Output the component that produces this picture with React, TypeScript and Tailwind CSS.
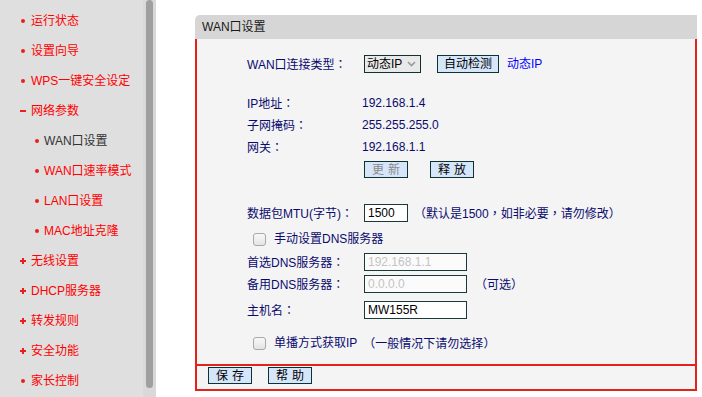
import React from "react";

const FONT = { fontFamily: '"Liberation Sans", "Noto Sans CJK SC", sans-serif' };

function T({ s }: { s: string }) {
  const parts = s.split(/([：（），])/);
  return (
    <>
      {parts.map((p, i) =>
        /^[：（），]$/.test(p) ? (
          <span key={i} className="font-['Noto_Sans_CJK_TC',sans-serif]">
            {p}
          </span>
        ) : (
          <React.Fragment key={i}>{p}</React.Fragment>
        )
      )}
    </>
  );
}

type Item = { label: string; kind: "dot" | "minus" | "plus" | "sub"; active?: boolean };

const items: Item[] = [
  { label: "运行状态", kind: "dot" },
  { label: "设置向导", kind: "dot" },
  { label: "WPS一键安全设定", kind: "dot" },
  { label: "网络参数", kind: "minus" },
  { label: "WAN口设置", kind: "sub", active: true },
  { label: "WAN口速率模式", kind: "sub" },
  { label: "LAN口设置", kind: "sub" },
  { label: "MAC地址克隆", kind: "sub" },
  { label: "无线设置", kind: "plus" },
  { label: "DHCP服务器", kind: "plus" },
  { label: "转发规则", kind: "plus" },
  { label: "安全功能", kind: "plus" },
  { label: "家长控制", kind: "dot" },
];

function Marker({ kind }: { kind: Item["kind"] }) {
  if (kind === "dot")
    return (
      <span className="flex w-[11px] items-center">
        <span className="ml-[1px] h-[4px] w-[4px] rounded-full bg-[#e8211c]" />
      </span>
    );
  if (kind === "sub")
    return (
      <span className="flex w-[9px] items-center">
        <span className="h-[4px] w-[4px] rounded-full bg-[#e8211c]" />
      </span>
    );
  if (kind === "minus")
    return (
      <span className="flex w-[11px] items-center">
        <span className="h-[2px] w-[6px] bg-[#e8211c]" />
      </span>
    );
  return (
    <span className="relative flex h-[6px] w-[11px] items-center">
      <span className="absolute left-0 top-[2px] h-[2px] w-[6px] bg-[#e8211c]" />
      <span className="absolute left-[2px] top-0 h-[6px] w-[2px] bg-[#e8211c]" />
    </span>
  );
}

function Sidebar() {
  return (
    <div className="flex h-[397px] w-[156px] shrink-0">
      <div className="w-[143px] bg-[#dfdfdf] pt-[6px]">
        {items.map((it) => (
          <div
            key={it.label}
            className={`flex h-[30px] items-center text-[12px] ${
              it.kind === "sub" ? "pl-[35px]" : "pl-[20px]"
            } ${it.active ? "text-[#333333]" : "text-[#ff0000]"}`}
          >
            <Marker kind={it.kind} />
            <span>{it.label}</span>
          </div>
        ))}
      </div>
      <div className="w-[13px] bg-[#d9d9d9] pl-[3px]">
        <div className="h-[388px] w-[7px] rounded-full bg-[#9f9f9f]" />
      </div>
    </div>
  );
}

function Btn({ children, disabled, w }: { children: React.ReactNode; disabled?: boolean; w: string }) {
  return (
    <div
      className={`flex h-[17px] ${w} items-center justify-center border border-[#0c3232] bg-[#d6e6fa] text-[12px] tracking-[4px] ${
        disabled ? "text-[#8a8a8a]" : "text-black"
      }`}
    >
      <span className="pl-[4px]">{children}</span>
    </div>
  );
}

function Label({ s }: { s: string }) {
  return (
    <div className="w-[117px] shrink-0 text-[#0a0a6e]">
      <T s={s} />
    </div>
  );
}

function Input({ value, w, muted }: { value: string; w: string; muted?: boolean }) {
  return (
    <div
      className={`flex h-[18px] ${w} items-center border border-[#1a3a3a] px-[3px] text-[12px] ${
        muted ? "bg-[#fbfbfb] text-[#c4c4c4]" : "bg-white text-black"
      }`}
    >
      {value}
    </div>
  );
}

function Check() {
  return <div className="ml-[6px] h-[13px] w-[13px] rounded-[3px] border border-[#a8a8a8] bg-gradient-to-b from-[#f8f8f8] to-[#e4e4e4]" />;
}

function Panel() {
  return (
    <div className="ml-[39px] mt-[15px] w-[502px]">
      <div className="flex h-[24px] items-center rounded-tl-[5px] bg-[#d6d6d6] pl-[7px] text-[12px] text-[#1a1a1a]">
        WAN口设置
      </div>
      <div className="h-[325px] border-x-2 border-[#e3221b] bg-[#f4f4f4] pl-[50px] pt-[16px] text-[12px] text-[#0a0a6e]">
        <div className="flex h-[18px] items-center">
          <Label s="WAN口连接类型：" />
          <div className="flex h-[18px] w-[57px] items-center justify-between border border-[#0c3232] bg-[#e9e9e9] pl-[2px] pr-[4px] text-black">
            <span>动态IP</span>
            <svg width="9" height="6" viewBox="0 0 9 6">
              <path d="M1 1 L4.5 4.5 L8 1" fill="none" stroke="#9a9a9a" strokeWidth="1.6" />
            </svg>
          </div>
          <div className="ml-[16px] flex h-[18px] w-[62px] items-center justify-center border border-[#0c3232] bg-[#d6e6fa] text-black">
            自动检测
          </div>
          <span className="ml-[8px] text-[#0000ff]">动态IP</span>
        </div>

        <div className="mt-[19px] flex h-[22px] items-center">
          <Label s="IP地址：" />
          <span className="-ml-[2px]">192.168.1.4</span>
        </div>
        <div className="flex h-[22px] items-center">
          <Label s="子网掩码：" />
          <span className="-ml-[2px]">255.255.255.0</span>
        </div>
        <div className="flex h-[22px] items-center">
          <Label s="网关：" />
          <span className="-ml-[2px]">192.168.1.1</span>
        </div>
        <div className="mt-[3px] flex items-center pl-[117px]">
          <Btn disabled w="w-[44px]">更新</Btn>
          <div className="ml-[22px]">
            <Btn w="w-[44px]">释放</Btn>
          </div>
        </div>

        <div className="mt-[26px] flex h-[18px] items-center">
          <Label s="数据包MTU(字节)：" />
          <Input value="1500" w="w-[44px]" />
          <span className="ml-[6px]">
            <T s="（默认是1500，如非必要，请勿修改）" />
          </span>
        </div>

        <div className="mt-[6px] flex h-[22px] items-center">
          <Check />
          <span className="ml-[8px]">手动设置DNS服务器</span>
        </div>

        <div className="mt-[3px] flex h-[18px] items-center">
          <Label s="首选DNS服务器：" />
          <Input value="192.168.1.1" w="w-[103px]" muted />
        </div>
        <div className="mt-[4px] flex h-[18px] items-center">
          <Label s="备用DNS服务器：" />
          <Input value="0.0.0.0" w="w-[103px]" muted />
          <span className="ml-[8px]">
            <T s="（可选）" />
          </span>
        </div>
        <div className="mt-[8px] flex h-[18px] items-center">
          <Label s="主机名：" />
          <Input value="MW155R" w="w-[103px]" />
        </div>

        <div className="mt-[13px] flex h-[22px] items-center">
          <Check />
          <span className="ml-[8px]">单播方式获取IP</span>
          <span className="ml-[6px]">
            <T s="（一般情况下请勿选择）" />
          </span>
        </div>
      </div>
      <div className="flex h-[27px] items-start gap-[16px] border-x-2 border-y-2 border-[#e3221b] bg-[#f4f4f4] pl-[11px] pt-[1px]">
        <Btn w="w-[44px]">保存</Btn>
        <Btn w="w-[44px]">帮助</Btn>
      </div>
    </div>
  );
}

export default function App() {
  return (
    <div className="flex h-[397px] w-full overflow-hidden bg-white" style={FONT}>
      <Sidebar />
      <Panel />
    </div>
  );
}
